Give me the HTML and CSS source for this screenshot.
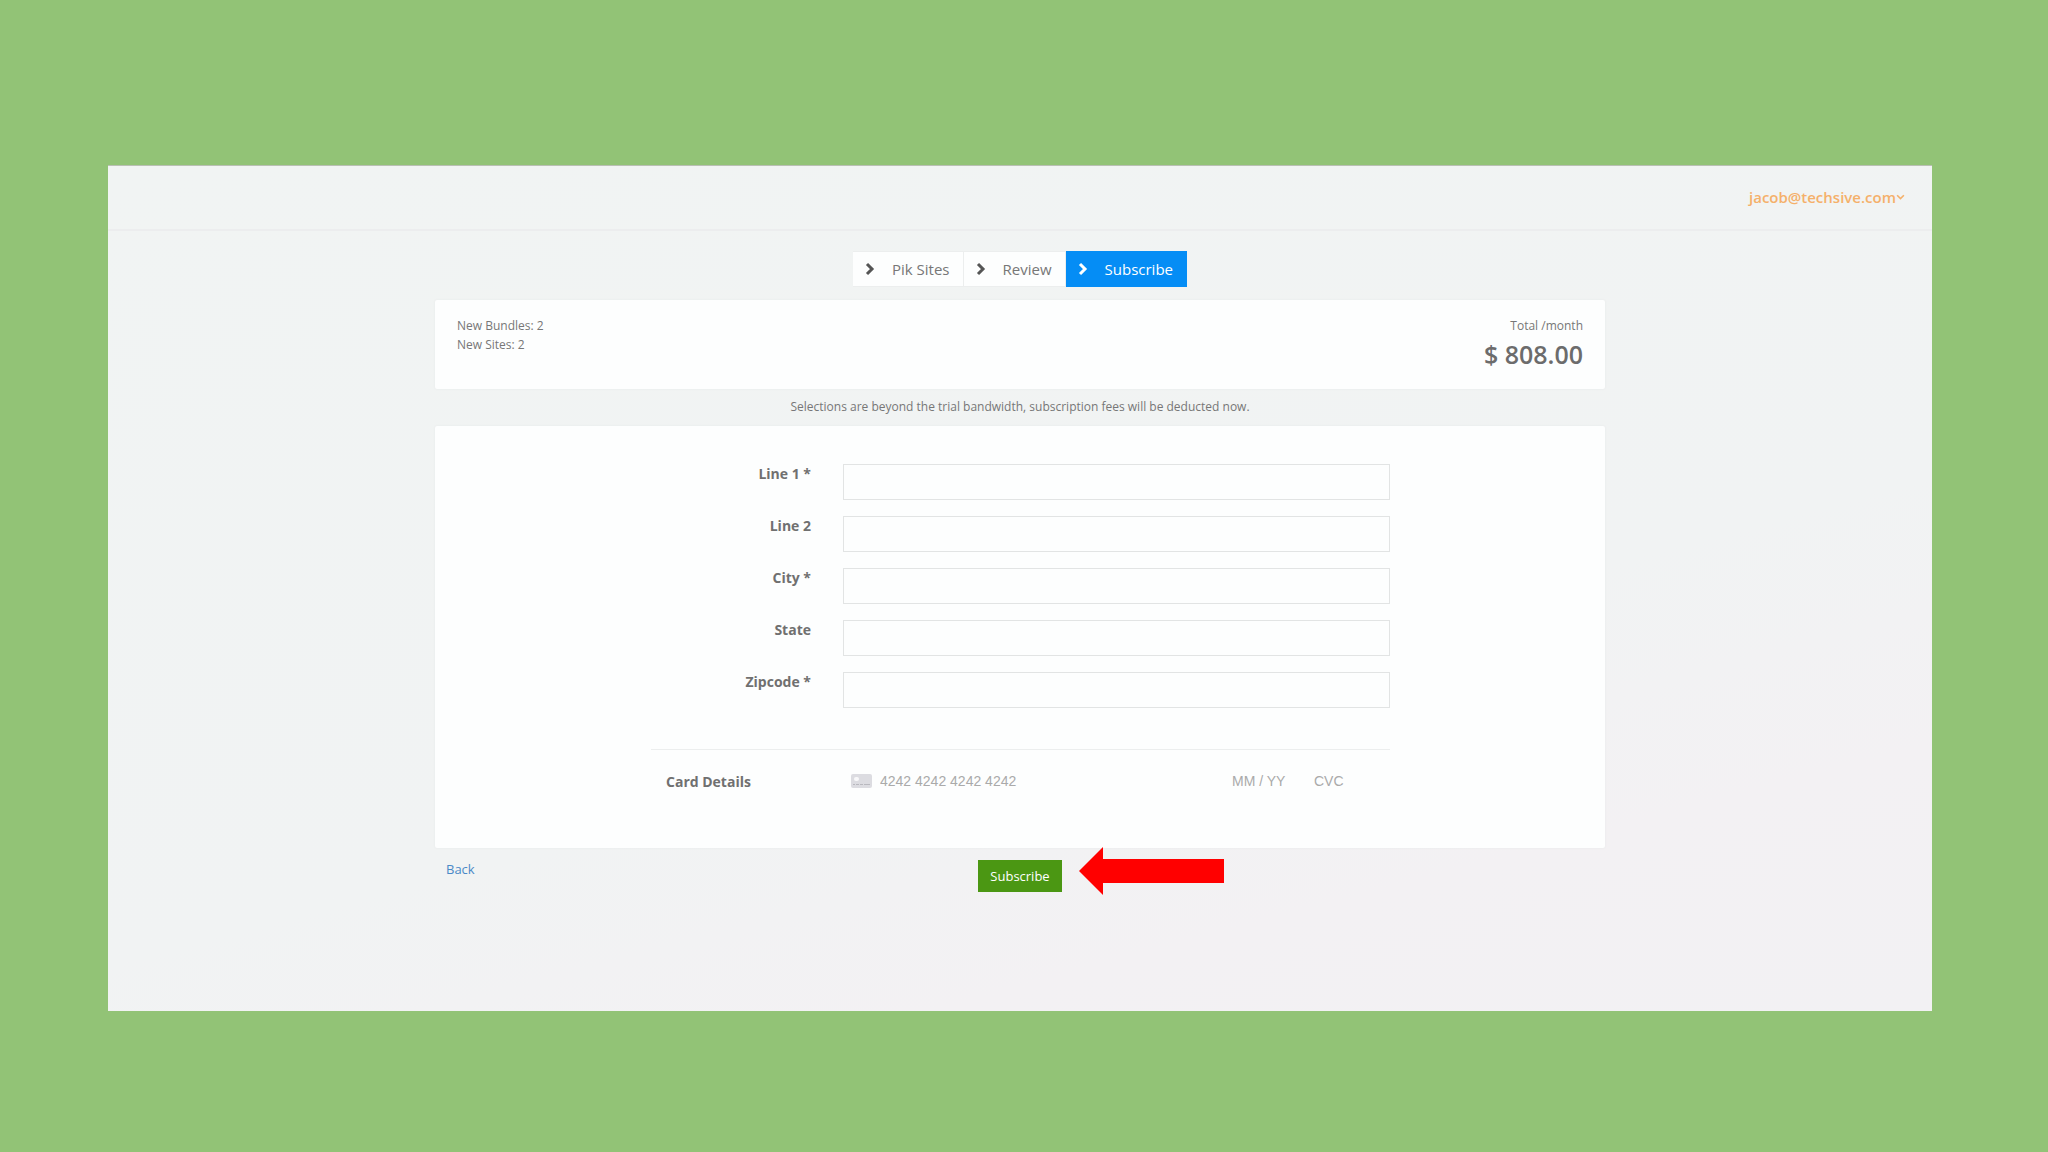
FILE: index.html
```html
<!DOCTYPE html>
<html lang="en">
<head>
<meta charset="utf-8">
<title>Subscribe</title>
<link rel="stylesheet" href="styles.css">
</head>
<body>
<div class="app">
  <header class="topbar">
    <button class="account" type="button">jacob@techsive.com<svg class="caret" viewBox="0 0 8 6" aria-hidden="true"><path d="M1 1l3 3 3-3"/></svg></button>
  </header>
  <main class="content">
    <nav class="steps" aria-label="Progress">
      <a class="step" href="#sites"><svg class="chevron" viewBox="0 0 10 14" aria-hidden="true"><path d="M2 2l5 5-5 5"/></svg>Pik Sites</a>
      <a class="step" href="#review"><svg class="chevron" viewBox="0 0 10 14" aria-hidden="true"><path d="M2 2l5 5-5 5"/></svg>Review</a>
      <a class="step step-active" href="#subscribe" aria-current="step"><svg class="chevron" viewBox="0 0 10 14" aria-hidden="true"><path d="M2 2l5 5-5 5"/></svg>Subscribe</a>
    </nav>
    <section class="card summary">
      <div>
        <div>New Bundles: 2</div>
        <div>New Sites: 2</div>
      </div>
      <div class="total">
        <div>Total /month</div>
        <div class="amount">$ 808.00</div>
      </div>
    </section>
    <p class="notice">Selections are beyond the trial bandwidth, subscription fees will be deducted now.</p>
    <form id="payment" class="card payment">
      <div class="fields">
        <div class="field"><label for="line1">Line 1 *</label><input id="line1" type="text"></div>
        <div class="field"><label for="line2">Line 2</label><input id="line2" type="text"></div>
        <div class="field"><label for="city">City *</label><input id="city" type="text"></div>
        <div class="field"><label for="state">State</label><input id="state" type="text"></div>
        <div class="field"><label for="zip">Zipcode *</label><input id="zip" type="text"></div>
      </div>
      <div class="card-details">
        <label for="number">Card Details</label>
        <div class="card-inputs">
          <svg class="card-icon" viewBox="0 0 21 14" aria-hidden="true"><rect width="21" height="14" rx="2" fill="#dcdce1"/><rect x="3" y="3" width="5" height="4" rx="2" fill="#f8f8fa"/><path d="M2 10.5h2m1 0h3m1 0h3m1 0h6" stroke="#b9b9bf" stroke-width="1.2"/></svg>
          <input id="number" class="number" type="text" placeholder="4242 4242 4242 4242">
          <input class="expiry" type="text" placeholder="MM / YY" aria-label="Expiry date">
          <input class="cvc" type="text" placeholder="CVC" aria-label="CVC">
        </div>
      </div>
    </form>
    <div class="actions">
      <a class="back" href="#review">Back</a>
      <div class="submit">
        <button class="subscribe" type="submit" form="payment">Subscribe</button>
        <svg class="pointer" viewBox="0 0 145 48" aria-hidden="true"><path d="M0 24L24 0v12h121v24H24v12z" fill="#f00"/></svg>
      </div>
    </div>
  </main>
</div>
</body>
</html>
```
FILE: styles.css
```css
* { box-sizing: border-box; }

body {
  margin: 0;
  padding: 165px 116px 140px 108px;
  background: #92c376;
  color: #777;
  font: 12px/19px "Open Sans", "Noto Sans", sans-serif;
}

button, input { font: inherit; color: inherit; }
a { text-decoration: none; }

.app {
  min-height: 846px;
  border-top: 1px solid #b9c0b3;
  background: linear-gradient(165deg, #f1f4f3 0%, #f1f3f3 60%, #f3f1f3 80%, #f2f1f3 100%);
}

.topbar {
  display: flex;
  justify-content: flex-end;
  align-items: center;
  height: 65px;
  padding: 0 27px;
  border-bottom: 2px solid #ecedee;
}

.account {
  display: flex;
  align-items: center;
  padding: 0;
  border: 0;
  background: none;
  color: #f5b06a;
  font-size: 15px;
  font-weight: 600;
}

.caret {
  width: 9px;
  height: 7px;
  fill: none;
  stroke: currentColor;
  stroke-width: 1.4;
}

.content {
  max-width: 1170px;
  margin: 0 auto;
  padding-top: 20px;
}

.steps {
  display: flex;
  justify-content: center;
  margin-bottom: 13px;
}

.step {
  display: flex;
  align-items: center;
  gap: 17px;
  height: 36px;
  padding: 0 13px 0 12px;
  border: 1px solid #eceeee;
  border-left-width: 0;
  background: #fdfefe;
  color: #777;
  font-size: 15px;
}

.step-active {
  border-color: #058df5;
  background: #058df5;
  color: #fff;
}

.chevron {
  width: 10px;
  height: 14px;
  fill: none;
  stroke: #555;
  stroke-width: 3;
}

.step-active .chevron { stroke: #fff; }

.card {
  border-radius: 2px;
  background: #fdfefe;
  box-shadow: 0 0 2px #e4e6e6;
}

.summary {
  display: flex;
  justify-content: space-between;
  min-height: 89px;
  padding: 16px 22px;
}

.total { text-align: right; }

.amount {
  color: #6c6c6c;
  font-size: 25px;
  line-height: 38px;
  font-weight: 600;
}

.notice {
  margin: 0;
  padding: 8px 0 10px;
  text-align: center;
}

.payment {
  min-height: 422px;
  padding: 38px 215px 0 216px;
}

.payment label {
  color: #707070;
  font-size: 14px;
  font-weight: 700;
}

.fields {
  display: grid;
  gap: 16px;
  padding-bottom: 41px;
}

.field {
  display: grid;
  grid-template-columns: 160px 1fr;
  column-gap: 32px;
}

.field label { text-align: right; }

.field input {
  width: 100%;
  height: 36px;
  padding: 0 12px;
  border: 1px solid #e2e4e4;
  background: #fdfefe;
}

.card-details {
  display: grid;
  grid-template-columns: 185px 1fr;
  align-items: center;
  padding: 19px 0 0 15px;
  border-top: 1px solid #eceeee;
}

.card-inputs {
  display: flex;
  align-items: center;
  height: 24px;
}

.card-icon {
  width: 21px;
  height: 14px;
}

.card-inputs input {
  padding: 0;
  border: 0;
  background: none;
  font: 14px/20px "Liberation Sans", Arial, sans-serif;
}

.card-inputs input::placeholder { color: #aaa; opacity: 1; }
.card-inputs .number { flex: 1; min-width: 0; margin-left: 8px; }
.expiry { width: 82px; }
.cvc { width: 76px; }

.actions {
  display: grid;
  grid-template-columns: 1fr auto 1fr;
  align-items: start;
  padding: 12px 11px;
}

.back { color: #4a89c7; font-size: 13px; }
.submit { position: relative; }

.subscribe {
  height: 32px;
  padding: 0 12px;
  border: 0;
  background: #4b9713;
  color: #fff;
  font-size: 13px;
}

.pointer {
  position: absolute;
  left: 101px;
  top: -13px;
  width: 145px;
  height: 48px;
}
```
